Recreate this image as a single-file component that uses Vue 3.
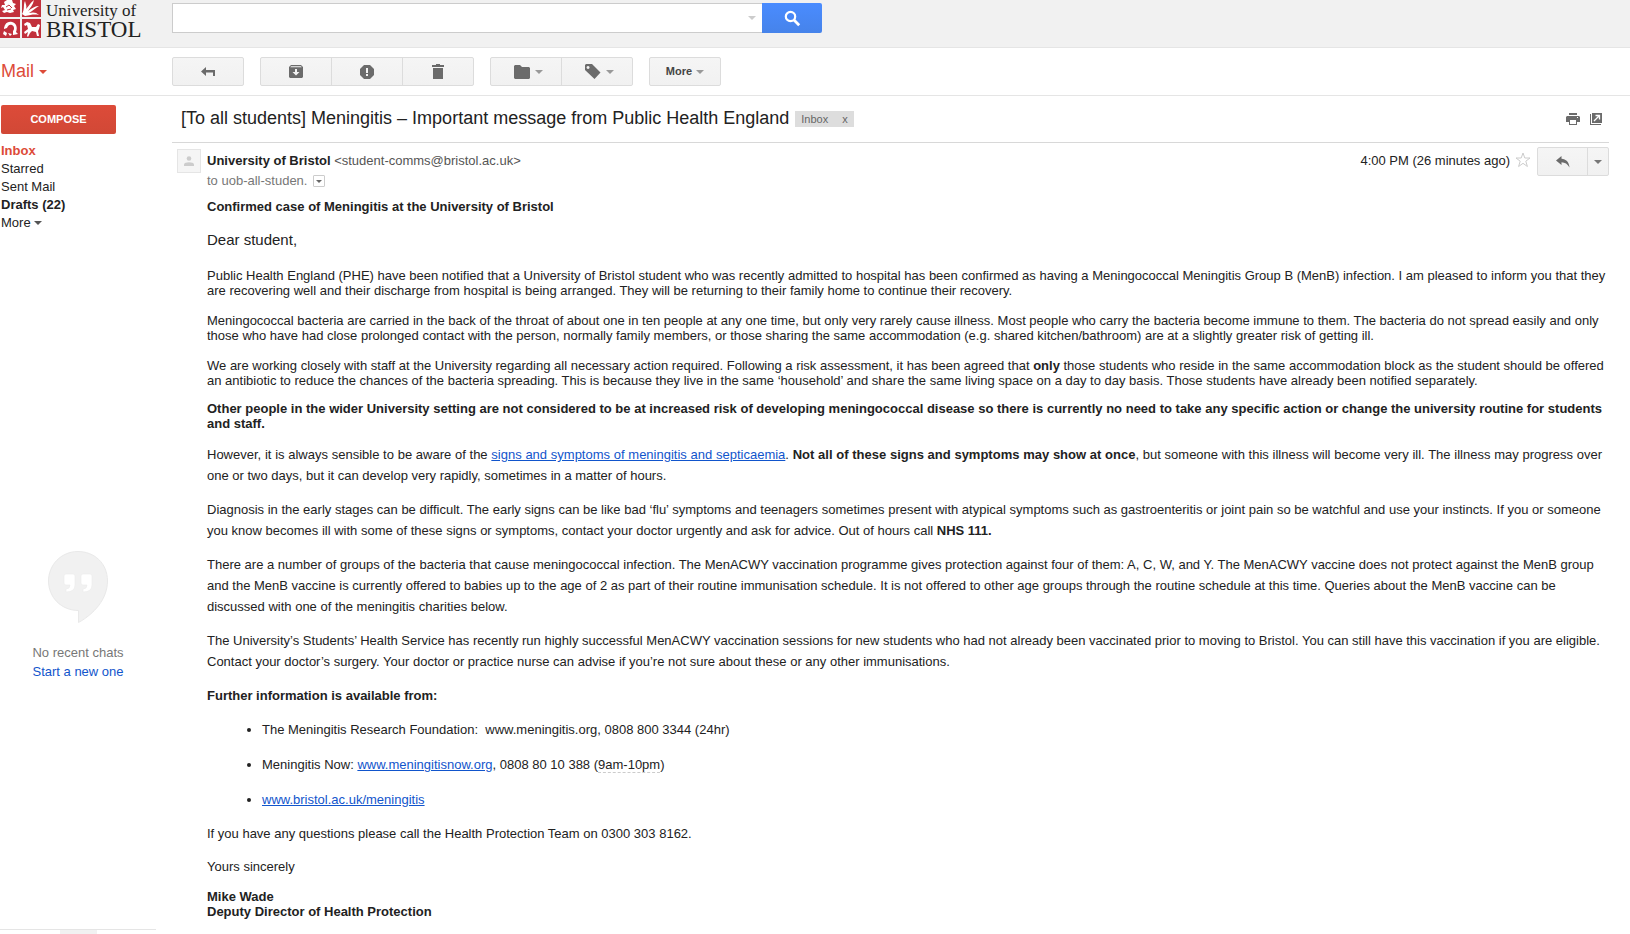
<script setup>
const folders = [
  { name: 'Inbox', active: true },
  { name: 'Starred' },
  { name: 'Sent Mail' },
  { name: 'Drafts (22)', strong: true },
]
</script>

<template>
  <div class="page">
    <header class="top">
      <a class="logo" href="#" aria-label="University of Bristol">
        <svg class="crest" width="41" height="38" viewBox="0 0 41 38" aria-hidden="true">
          <path fill="#c2303c" d="M0 0h20v17H0zM22 0h19v17H22zM0 19h20v19H0zM22 19h19v19H22z" />
          <g fill="#fff">
            <path d="M4 2l3-2h5l1 3 3 1-2 2 2 3-3 1 1 2-4 1-3-1-3 1-2-2 3-1-2-3-2 1 1-3 3 0z" />
            <path d="M22 14C25 9 23 5 25 1c1 4 2 5 1 8 3-3 4-6 8-9-1 5-4 8-6 11 4-3 7-5 11-5-4 2-6 5-10 7 4-1 7-1 10 2-5-1-8 0-14 1z" />
            <path d="M4 28c1-5 4-7 8-6 4 1 6 5 4 10l2 2-5 1 0-4c2-2 1-5-1-6-3-1-4 1-5 3l-3 1zM4 31l3 2-1 3-3-2zM8 33l4 1-2 2z" />
            <path d="M24 24l3-2 3 1 2 4 4 0 2-3 2 1-1 4-1 2 1 5-2 0-1-4-4-1-2 2-2 4-1-1 1-4-3 2-1-2 4-3-1-4-2 1z" />
          </g>
          <path d="M6 7l3-2 3 3M7 10l4-1" stroke="#c2303c" fill="none" />
        </svg>
        <span class="wordmark"><span class="of">University of</span><span class="name">BRISTOL</span></span>
      </a>
      <form class="search" @submit.prevent>
        <input type="text" aria-label="Search mail" />
        <button type="button" class="opts" aria-label="Search options"><i class="caret pale"></i></button>
        <button type="submit" class="go" aria-label="Search">
          <svg width="17" height="17" viewBox="0 0 17 17"><circle cx="6.5" cy="6.5" r="4.7" fill="none" stroke="#fff" stroke-width="2.2" /><path d="M10 10l5.2 5.2" stroke="#fff" stroke-width="2.8" /></svg>
        </button>
      </form>
    </header>

    <div class="bar">
      <button class="mail" type="button">Mail <i class="caret red"></i></button>
      <div class="tools">
        <div class="group">
          <button type="button" aria-label="Back to Inbox">
            <svg width="14" height="10" viewBox="0 0 14 10"><path fill="#6b6b6b" d="M0 4.5L5 0v3h9v6h-2V5.500H5V9z" /></svg>
          </button>
        </div>
        <div class="group">
          <button type="button" aria-label="Archive">
            <svg width="14" height="13" viewBox="0 0 14 13"><path fill="#6b6b6b" fill-rule="evenodd" d="M2 0h10l2 2v10l-1 1H1l-1-1V2zM2 1.200L1.300 2.200h11.400L12 1.200zM6 4v3H3.500L7 10.500 10.500 7H8V4z" /></svg>
          </button>
          <button type="button" aria-label="Report spam">
            <svg width="14" height="14" viewBox="0 0 14 14"><path fill="#6b6b6b" fill-rule="evenodd" d="M4 0h6l4 4v6l-4 4H4l-4-4V4zM6 3v5h2V3zM6 9v2h2V9z" /></svg>
          </button>
          <button type="button" aria-label="Delete">
            <svg width="12" height="15" viewBox="0 0 12 15"><path fill="#6b6b6b" d="M4 0h4v1h4v2H0V1h4zM1 4h10v11H1z" /></svg>
          </button>
        </div>
        <div class="group wide">
          <button type="button" aria-label="Move to">
            <svg width="16" height="14" viewBox="0 0 16 14"><path fill="#6b6b6b" d="M1 0h5l2 2h7l1 1v10l-1 1H1l-1-1V1z" /></svg><i class="caret"></i>
          </button>
          <button type="button" aria-label="Labels">
            <svg width="16" height="15" viewBox="0 0 16 15"><path fill="#6b6b6b" fill-rule="evenodd" d="M1 0h6l8.500 8.500L9.500 15 0 6V1zM3 2a1.500 1.500 0 1 0 .1 0z" /></svg><i class="caret"></i>
          </button>
        </div>
        <div class="group">
          <button type="button" class="more">More<i class="caret"></i></button>
        </div>
      </div>
    </div>

    <div class="body">
      <aside class="side">
        <button class="compose" type="button">COMPOSE</button>
        <nav>
          <a v-for="f in folders" :key="f.name" href="#" :class="{ active: f.active, strong: f.strong }">{{ f.name }}</a>
          <a href="#">More<i class="caret dark"></i></a>
        </nav>
        <div class="chat">
          <svg width="60" height="72" viewBox="0 0 60 72" aria-hidden="true">
            <path fill="#f1f1f1" stroke="#e9e9e9" d="M30 .5C13 .5.500 14 .500 30S13 59.500 30.500 59.500v12C46 63 59.500 48 59.500 30S46 .5 30 .5z" />
            <path fill="#fff" stroke="#ebebeb" stroke-width=".6" d="M18 23h7q2 0 2 2v9q0 7-9 7v-3q4 0 4-4h-4q-2 0-2-2v-7q0-2 2-2zM35 23h7q2 0 2 2v9q0 7-9 7v-3q4 0 4-4h-4q-2 0-2-2v-7q0-2 2-2z" />
          </svg>
          <p>No recent chats</p>
          <a href="#">Start a new one</a>
        </div>
        <div class="dock"><span></span></div>
      </aside>

      <main>
        <div class="subject">
          <h1>[To all students] Meningitis – Important message from Public Health England</h1>
          <span class="tag">Inbox<button type="button" aria-label="Remove label Inbox">x</button></span>
          <div class="acts">
            <button type="button" aria-label="Print all">
              <svg width="14" height="12" viewBox="0 0 14 12"><path fill="#6b6b6b" fill-rule="evenodd" d="M3 0h8v2H3zM1 3h12l1 1v5h-3v3H3V9H0V4zM4 7v4h6V7zM11 4v1h1V4z" /></svg>
            </button>
            <button type="button" aria-label="In new window">
              <svg width="12" height="12" viewBox="0 0 12 12"><path fill="#6b6b6b" d="M0 1h1v10h10v1H0zM2 0h10v10H2z" /><path d="M4 8l5-5M5.500 2.500h4v4" stroke="#fff" stroke-width="1.300" fill="none" /></svg>
            </button>
          </div>
        </div>

        <article>
          <div class="avatar">
            <svg width="10" height="10" viewBox="0 0 10 10" aria-hidden="true"><circle cx="5" cy="2.500" r="2.300" fill="#ccc" /><path fill="#ccc" d="M0 10V8.500C0 5.500 10 5.500 10 8.500V10z" /></svg>
          </div>
          <div class="message">
            <div class="meta">
              <div class="who">
                <div><b>University of Bristol</b> <span class="addr">&lt;student-comms@bristol.ac.uk&gt;</span></div>
                <div class="to">to uob-all-studen. <button type="button" aria-label="Show details"><i class="caret small"></i></button></div>
              </div>
              <div class="when">
                <time>4:00 PM (26 minutes ago)</time>
                <button type="button" class="star" aria-label="Star">
                  <svg width="16" height="16" viewBox="0 0 16 16"><path fill="#fff" stroke="#ccc" d="M8 1l1.800 5h5.200l-4.200 3.200L12.400 14.500 8 11.300 3.600 14.500l1.600-5.300L1 6h5.200z" /></svg>
                </button>
                <div class="group reply">
                  <button type="button" aria-label="Reply">
                    <svg width="14" height="12" viewBox="0 0 14 12"><path fill="#6b6b6b" d="M0 4.500L5.500 0v2.800C10 3 13 6 13.500 11.500 11.500 8 9 6.500 5.500 6.300V9z" /></svg>
                  </button>
                  <button type="button" class="drop" aria-label="More reply options"><i class="caret mid"></i></button>
                </div>
              </div>
            </div>

            <div class="text">
              <p><b>Confirmed case of Meningitis at the University of Bristol</b></p>
              <p class="dear">Dear student,</p>
              <p class="full">Public Health England (PHE) have been notified that a University of Bristol student who was recently admitted to hospital has been confirmed as having a Meningococcal Meningitis Group B (MenB) infection. I am pleased to inform you that they are recovering well and their discharge from hospital is being arranged. They will be returning to their family home to continue their recovery.</p>
              <p>Meningococcal bacteria are carried in the back of the throat of about one in ten people at any one time, but only very rarely cause illness. Most people who carry the bacteria become immune to them. The bacteria do not spread easily and only those who have had close prolonged contact with the person, normally family members, or those sharing the same accommodation (e.g. shared kitchen/bathroom) are at a slightly greater risk of getting ill.</p>
              <div class="airy">
                <p class="full tight">We are working closely with staff at the University regarding all necessary action required. Following a risk assessment, it has been agreed that <b>only</b> those students who reside in the same accommodation block as the student should be offered an antibiotic to reduce the chances of the bacteria spreading. This is because they live in the same ‘household’ and share the same living space on a day to day basis. Those students have already been notified separately.</p>
                <p class="just tight"><b>Other people in the wider University setting are not considered to be at increased risk of developing meningococcal disease so there is currently no need to take any specific action or change the university routine for students and staff.</b></p>
                <p class="just">However, it is always sensible to be aware of the <a href="#">signs and symptoms of meningitis and septicaemia</a>. <b>Not all of these signs and symptoms may show at once</b>, but someone with this illness will become very ill. The illness may progress over one or two days, but it can develop very rapidly, sometimes in a matter of hours.</p>
                <p>Diagnosis in the early stages can be difficult. The early signs can be like bad ‘flu’ symptoms and teenagers sometimes present with atypical symptoms such as gastroenteritis or joint pain so be watchful and use your instincts. If you or someone you know becomes ill with some of these signs or symptoms, contact your doctor urgently and ask for advice. Out of hours call <b>NHS 111.</b></p>
                <p>There are a number of groups of the bacteria that cause meningococcal infection. The MenACWY vaccination programme gives protection against four of them: A, C, W, and Y. The MenACWY vaccine does not protect against the MenB group and the MenB vaccine is currently offered to babies up to the age of 2 as part of their routine immunisation schedule. It is not offered to other age groups through the routine schedule at this time. Queries about the MenB vaccine can be discussed with one of the meningitis charities below.</p>
                <p>The University’s Students’ Health Service has recently run highly successful MenACWY vaccination sessions for new students who had not already been vaccinated prior to moving to Bristol. You can still have this vaccination if you are eligible. Contact your doctor’s surgery. Your doctor or practice nurse can advise if you’re not sure about these or any other immunisations.</p>
                <p><b>Further information is available from:</b></p>
                <ul>
                  <li>The Meningitis Research Foundation: &nbsp;www.meningitis.org, 0808 800 3344 (24hr)</li>
                  <li>Meningitis Now: <a href="#">www.meningitisnow.org</a>, 0808 80 10 388 (<span class="hint">9am-10pm</span>)</li>
                  <li><a href="#">www.bristol.ac.uk/meningitis</a></li>
                </ul>
                <p>If you have any questions please call the Health Protection Team on 0300 303 8162.</p>
              </div>
              <p>Yours sincerely</p>
              <p><b>Mike Wade<br />Deputy Director of Health Protection</b></p>
            </div>
          </div>
        </article>
      </main>
    </div>
  </div>
</template>

<style>
body {
  margin: 0;
  background: #fff;
}
</style>

<style scoped>
.page {
  min-height: 100vh;
  display: flex;
  flex-direction: column;
  font: 13px/15px "Liberation Sans", Arial, sans-serif;
  color: #222;
}
button {
  font: inherit;
  color: inherit;
  padding: 0;
  border: 0;
  background: none;
}
svg {
  display: block;
  flex: none;
}
p,
h1,
ul {
  margin: 0;
}
.caret {
  display: inline-block;
  border: 4px solid transparent;
  border-top-color: #999;
  border-bottom: 0;
}
.caret.pale { border-top-color: #ccc; }
.caret.red { border-top-color: #dd4b39; vertical-align: 3px; }
.caret.dark { border-top-color: #555; margin-left: 3px; vertical-align: 2px; }
.caret.mid { border-top-color: #777; }
.caret.small { border-width: 3px 3px 0; border-top-color: #666; }

.top,
.bar {
  display: grid;
  grid-template-columns: 172px 1fr;
  height: 47px;
  border-bottom: 1px solid #e5e5e5;
}
.top { background: #f1f1f1; }
.logo {
  display: flex;
  align-items: flex-start;
  gap: 5px;
  color: #222;
  text-decoration: none;
  font-family: "Liberation Serif", "Times New Roman", serif;
}
.wordmark { display: flex; flex-direction: column; padding-top: 2px; }
.of { font-size: 17px; line-height: 18px; }
.name { font-size: 23px; line-height: 20px; }
.search {
  display: flex;
  width: 650px;
  height: 30px;
  margin-top: 3px;
}
.search input {
  flex: 1;
  min-width: 0;
  border: 1px solid #ccc;
  border-right: 0;
  background: #fff;
  padding: 0 8px;
  outline: 0;
}
.opts {
  width: 20px;
  background: #fff;
  border: 1px solid #ccc;
  border-width: 1px 0;
  display: flex;
  align-items: center;
  justify-content: center;
}
.go {
  width: 60px;
  display: flex;
  align-items: center;
  justify-content: center;
  background: linear-gradient(#4a8cff, #4683ea);
  border-radius: 0 2px 2px 0;
}
.mail {
  justify-self: start;
  padding: 0 0 0 1px;
  font-size: 18px;
  color: #dd4b39;
}
.tools { display: flex; align-items: center; gap: 16px; }
.group {
  display: flex;
  height: 27px;
  border: 1px solid #dcdcdc;
  border-radius: 2px;
  background: linear-gradient(#f5f5f5, #f1f1f1);
}
.group button {
  width: 70px;
  display: flex;
  align-items: center;
  justify-content: center;
  gap: 5px;
}
.group button + button { border-left: 1px solid #dcdcdc; width: 71px; }
.group.wide button { box-sizing: border-box; padding-left: 4px; }
.group .more { font-size: 11px; font-weight: bold; color: #444; gap: 4px; }

.body {
  flex: 1;
  display: grid;
  grid-template-columns: 172px 1fr;
}
.side {
  width: 156px;
  display: flex;
  flex-direction: column;
  padding-top: 9px;
}
.compose {
  width: 115px;
  height: 29px;
  margin-left: 1px;
  background: linear-gradient(#dd4b39, #d14836);
  border-radius: 2px;
  color: #fff;
  font-size: 11px;
  font-weight: bold;
}
nav {
  display: flex;
  flex-direction: column;
  padding: 8px 0 0 1px;
  line-height: 18px;
}
nav a { color: #222; text-decoration: none; }
nav .active { color: #dd4b39; font-weight: bold; }
nav .strong { font-weight: bold; }
.chat {
  flex: 1;
  display: flex;
  flex-direction: column;
  align-items: center;
  justify-content: center;
  padding-top: 70px;
  line-height: 19px;
  color: #777;
}
.chat svg { margin-bottom: 20px; }
.chat a { color: #15c; text-decoration: none; }
.dock {
  height: 4px;
  border-top: 1px solid #e5e5e5;
  display: flex;
  justify-content: center;
}
.dock span { width: 37px; background: #f1f1f1; }

main { padding-right: 21px; min-width: 0; }
.subject {
  display: flex;
  align-items: center;
  height: 46px;
  padding-left: 9px;
  border-bottom: 1px solid #d8d8d8;
}
h1 { font-size: 18px; font-weight: normal; line-height: 22px; padding-bottom: 2px; }
.tag {
  display: flex;
  gap: 14px;
  margin-left: 6px;
  padding: 0 6px;
  background: #ddd;
  color: #666;
  font-size: 11px;
  line-height: 16px;
}
.acts { display: flex; gap: 10px; margin-left: auto; padding-right: 7px; }

article {
  display: flex;
  padding: 4px 0 0 5px;
}
.avatar {
  width: 22px;
  height: 22px;
  margin-top: 2px;
  border: 1px solid #e5e5e5;
  background: #f5f5f5;
  display: flex;
  align-items: center;
  justify-content: center;
}
.message { flex: 1; min-width: 0; padding-left: 6px; }
.meta { display: flex; justify-content: space-between; height: 52px; }
.who { line-height: 20px; padding-top: 4px; }
.addr { color: #555; }
.to { display: flex; align-items: center; gap: 6px; color: #777; }
.to button {
  width: 12px;
  height: 12px;
  border: 1px solid #ccc;
  border-radius: 1px;
  display: flex;
  align-items: center;
  justify-content: center;
}
.when { display: flex; align-items: flex-start; }
.when time { line-height: 28px; }
.star { margin: 5px 6px 0 5px; }
.reply button { width: 49px; }
.group button.drop { width: 21px; }

.text {
  display: flex;
  flex-direction: column;
  gap: 15px;
  padding-right: 7px;
}
.dear { font-size: 15px; line-height: 22px; padding-bottom: 2px; }
.just { text-align: justify; }
.full { margin-right: -16px; }
.airy {
  display: flex;
  flex-direction: column;
  gap: 13px;
  line-height: 21px;
}
.tight { line-height: 15px; }
.text a { color: #15c; }
ul {
  display: flex;
  flex-direction: column;
  gap: 14px;
  padding-left: 55px;
}
.hint { border-bottom: 1px dashed #ccc; }
</style>
